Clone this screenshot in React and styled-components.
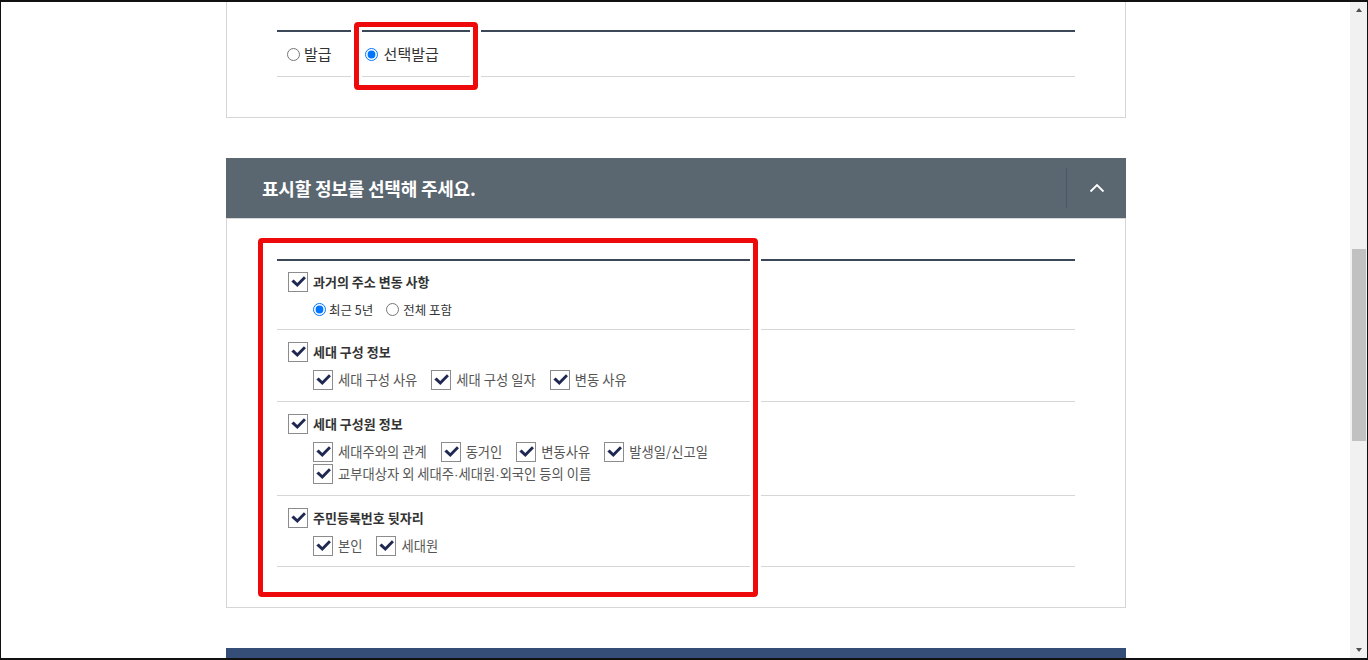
import React from 'react'
import styled, { createGlobalStyle } from 'styled-components'

const GlobalStyle = createGlobalStyle`
  html, body {
    margin: 0;
    padding: 0;
    background: #fff;
  }
  body {
    font-family: 'Noto Sans CJK KR', 'Noto Sans', sans-serif;
    color: #333;
  }
  * {
    box-sizing: border-box;
  }
`

const Frame = styled.div`
  display: flex;
  height: 660px;
  border-style: solid;
  border-color: #111;
  border-width: 2px 1px 2px 1px;
  overflow: hidden;
`

const Viewport = styled.div`
  position: relative;
  flex: 1;
  overflow: hidden;
  background: #fff;
`

const Wrap = styled.div`
  width: 900px;
  margin-left: 225px;
  display: flex;
  flex-direction: column;
  gap: 40px;
`

const Panel = styled.section`
  border: 1px solid #d6d6d6;
  border-top: ${props => (props.cut ? 'none' : '1px solid #d6d6d6')};
  padding: ${props => (props.cut ? '28px 50px 40px' : '40px 50px')};
  background: #fff;
`

const Section = styled.section`
  display: flex;
  flex-direction: column;
`

const SectionHeader = styled.header`
  height: 60px;
  background: #5a6670;
  display: flex;
  align-items: center;
`

const SectionTitle = styled.h2`
  flex: 1;
  margin: 0;
  padding-left: 36px;
  font-size: 18px;
  font-weight: 700;
  letter-spacing: -0.2px;
  color: #fff;
`

const Toggle = styled.button`
  width: 60px;
  height: 40px;
  border: none;
  border-left: 1px solid #4a5766;
  background: transparent;
  display: flex;
  align-items: center;
  justify-content: center;
  padding: 0;
  cursor: pointer;
`

const OptionTable = styled.div`
  border-top: 2px solid #3c4758;
`

const RadioRow = styled.div`
  height: 45px;
  display: flex;
  align-items: center;
  gap: 33px;
  padding-left: 10px;
  border-bottom: 1px solid #d6d6d6;
`

const Group = styled.div`
  display: flex;
  flex-direction: column;
  gap: 8px;
  padding: ${props => props.pt || 12}px 0 ${props => props.pb || 11}px 11px;
  border-bottom: 1px solid #d6d6d6;
`

const SubLines = styled.div`
  display: flex;
  flex-direction: column;
  gap: 2px;
  padding-left: 25px;
`

const SubLine = styled.div`
  display: flex;
  align-items: center;
  gap: ${props => props.gap || 14}px;
  height: ${props => props.h || 20}px;
`

const Item = styled.label`
  display: flex;
  align-items: center;
  gap: ${props => props.gap || 5}px;
  font-size: ${props => props.size || 12.5}px;
  font-weight: ${props => (props.strong ? 700 : 400)};
  color: ${props => (props.dim ? '#555' : '#333')};
  line-height: 20px;
  white-space: nowrap;
`

const Dot = styled.span`
  font-family: 'Liberation Sans', sans-serif;
`

const Radio = styled.input.attrs({ type: 'radio' })`
  width: 13px;
  height: 13px;
  margin: 0;
  accent-color: #0075ff;
`

const Box = styled.span`
  width: 20px;
  height: 20px;
  flex: none;
  border: 1px solid #8c8c8c;
  background: #fff;
  display: flex;
  align-items: center;
  justify-content: center;
`

const NavyBar = styled.div`
  height: 40px;
  background: #344e78;
`

const Highlight = styled.div`
  position: absolute;
  border: 5px solid #ee0a0a;
  border-radius: 4px;
  box-shadow: 0 0 0 3px #fff, inset 0 0 0 3px #fff;
  pointer-events: none;
`

const Scrollbar = styled.div`
  width: 17px;
  flex: none;
  background: #f1f1f1;
  display: flex;
  flex-direction: column;
`

const ArrowButton = styled.div`
  height: 17px;
  display: flex;
  align-items: center;
  justify-content: center;
  &::after {
    content: '';
    width: 0;
    height: 0;
    border-left: 3.5px solid transparent;
    border-right: 3.5px solid transparent;
    ${props =>
      props.down
        ? 'border-top: 4px solid #505050; margin-top: 1px;'
        : 'border-bottom: 4px solid #505050; margin-bottom: 1px;'}
  }
`

const Track = styled.div`
  flex: 1;
`

const Thumb = styled.div`
  margin: 230px 1px 0 2px;
  height: 192px;
  background: #c1c1c1;
`

const Check = () => (
  <Box>
    <svg width="20" height="20" viewBox="0 0 20 20">
      <path d="M2.6 9.4 L5.2 7.2 L9.2 11.1 L16.6 3.6 L18.8 5.9 L9.3 15.6 Z" fill="#1f2852" />
    </svg>
  </Box>
)

const CheckItem = ({ children, strong }) => (
  <Item strong={strong} size={strong ? 13 : 13.3} dim={!strong}>
    <Check />
    <span>{children}</span>
  </Item>
)

const groups = [
  {
    title: '세대 구성 정보',
    lines: [['세대 구성 사유', '세대 구성 일자', '변동 사유']]
  },
  {
    title: '세대 구성원 정보',
    lines: [
      ['세대주와의 관계', '동거인', '변동사유', '발생일/신고일'],
      [
        <>
          교부대상자 외 세대주<Dot>·</Dot>세대원<Dot>·</Dot>외국인 등의 이름
        </>
      ]
    ]
  },
  {
    title: '주민등록번호 뒷자리',
    lines: [['본인', '세대원']],
    pb: 10
  }
]

const App = () => (
  <>
    <GlobalStyle />
    <Frame>
      <Viewport>
        <Wrap>
          <Panel cut>
            <OptionTable>
              <RadioRow>
                <Item size={15} gap={4}>
                  <Radio name="issue" />
                  발급
                </Item>
                <Item size={15} gap={6}>
                  <Radio name="issue" defaultChecked />
                  선택발급
                </Item>
              </RadioRow>
            </OptionTable>
          </Panel>

          <Section>
            <SectionHeader>
              <SectionTitle>표시할 정보를 선택해 주세요.</SectionTitle>
              <Toggle aria-label="접기">
                <svg width="16" height="10" viewBox="0 0 16 10">
                  <polyline
                    points="1.5,8.5 8,2 14.5,8.5"
                    fill="none"
                    stroke="#fff"
                    strokeWidth="1.8"
                  />
                </svg>
              </Toggle>
            </SectionHeader>
            <Panel>
              <OptionTable>
                <Group pt={11} pb={10}>
                  <CheckItem strong>과거의 주소 변동 사항</CheckItem>
                  <SubLines>
                    <SubLine gap={13} h={19}>
                      <Item gap={3}>
                        <Radio name="period" defaultChecked />
                        최근 5년
                      </Item>
                      <Item gap={4}>
                        <Radio name="period" />
                        전체 포함
                      </Item>
                    </SubLine>
                  </SubLines>
                </Group>
                {groups.map(group => (
                  <Group key={group.title} pb={group.pb}>
                    <CheckItem strong>{group.title}</CheckItem>
                    <SubLines>
                      {group.lines.map((line, i) => (
                        <SubLine key={i}>
                          {line.map((label, j) => (
                            <CheckItem key={j}>{label}</CheckItem>
                          ))}
                        </SubLine>
                      ))}
                    </SubLines>
                  </Group>
                ))}
              </OptionTable>
            </Panel>
          </Section>

          <NavyBar />
        </Wrap>

        <Highlight style={{ left: 353, top: 20, width: 124, height: 68 }} />
        <Highlight style={{ left: 257, top: 236, width: 500, height: 359 }} />
      </Viewport>
      <Scrollbar>
        <ArrowButton />
        <Track>
          <Thumb />
        </Track>
        <ArrowButton down />
      </Scrollbar>
    </Frame>
  </>
)

export default App
